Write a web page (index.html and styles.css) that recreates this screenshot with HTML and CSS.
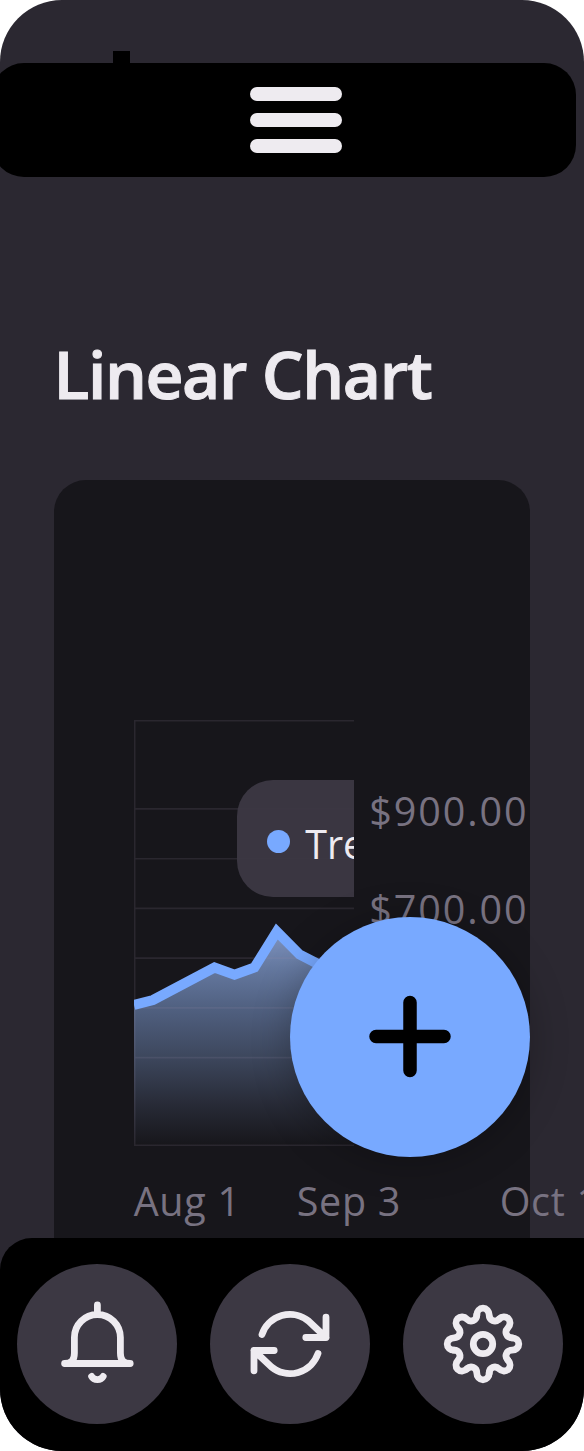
FILE: index.html
```
<!DOCTYPE html>
<html lang="en">
<head>
<meta charset="utf-8">
<title>Linear Chart</title>
<link rel="stylesheet" href="styles.css">
</head>
<body>
<div class="device">
  <header class="topbar">
    <span class="notch"></span>
    <button class="menu" aria-label="Menu"><i></i><i></i><i></i></button>
  </header>
  <main class="content">
    <h1 class="title">Linear Chart</h1>
    <section class="card">
      <div class="chart">
        <div class="plot">
          <svg class="graph" width="221" height="426" viewBox="0 0 221 426">
            <defs>
              <linearGradient id="area" gradientUnits="userSpaceOnUse" x1="0" y1="205" x2="0" y2="425">
                <stop offset="0" stop-color="#8498c4"/>
                <stop offset=".2" stop-color="#64789f"/>
                <stop offset=".38" stop-color="#506080"/>
                <stop offset=".6" stop-color="#3d475d"/>
                <stop offset=".82" stop-color="#272a36"/>
                <stop offset="1" stop-color="#17161b"/>
              </linearGradient>
            </defs>
            <path d="M0 285 19 280 80.5 247.5 100.5 254.8 120.5 247.5 142.8 211.5 165.5 234.5 187 245.5 221 262V425H0Z" fill="url(#area)"/>
            <path class="grid" d="M0 .7H221M0 88.9H221M0 138.7H221M0 188.4H221M0 238.1H221M0 287.9H221M0 337.6H221M0 425.3H221M.7 0V426"/>
            <path class="trend" d="M0 285 19 280 80.5 247.5 100.5 254.8 120.5 247.5 142.8 211.5 165.5 234.5 187 245.5 221 262"/>
          </svg>
          <div class="tooltip"><span class="dot"></span><span>Trend</span></div>
        </div>
        <div class="prices"><span>$900.00</span><span>$700.00</span></div>
      </div>
      <div class="dates"><span class="aug">Aug 1</span><span class="sep">Sep 3</span><span>Oct 1</span></div>
    </section>
  </main>
  <button class="fab" aria-label="Add">
    <svg width="84" height="84" viewBox="0 0 84 84"><path d="M8 41.5H76M42 7.5V75.5"/></svg>
  </button>
  <nav class="tabs">
    <button class="tab" aria-label="Notifications">
      <svg class="icon" viewBox="-40 -44 80 88">
        <path d="M.4-39V-30M-32.4 19.5H33.2C25.9 19.5 23.4 15.5 23.4 9V-6.5A23 23 0 0 0-22.6-6.5V9C-22.6 15.5-25.1 19.5-32.4 19.5M-5.4 32.4C-3.1 36.7 3.9 36.7 6.2 32.4"/>
      </svg>
    </button>
    <button class="tab" aria-label="Refresh">
      <svg class="icon" viewBox="-40 -44 80 88">
        <g id="turn"><path d="M-28-9.5A29.5 29.5 0 0 1 18.5-23L36-6.5M36-26.8V-6.5H15.8"/></g>
        <use href="#turn" transform="rotate(180)"/>
      </svg>
    </button>
    <button class="tab" aria-label="Settings">
      <svg class="icon" viewBox="-40 -44 80 88">
        <circle r="9.7"/>
        <g id="tooth"><path d="M-6.2-29A6.2 6.8 0 0 1 6.2-29C6.2-23.5 12.2-21 16.1-24.9"/></g>
        <use href="#tooth" transform="rotate(45)"/>
        <use href="#tooth" transform="rotate(90)"/>
        <use href="#tooth" transform="rotate(135)"/>
        <use href="#tooth" transform="rotate(180)"/>
        <use href="#tooth" transform="rotate(225)"/>
        <use href="#tooth" transform="rotate(270)"/>
        <use href="#tooth" transform="rotate(315)"/>
      </svg>
    </button>
  </nav>
</div>
</body>
</html>
```
FILE: styles.css
```
* { box-sizing: border-box; }
body { margin: 0; background: #fff; overflow: hidden; font-family: "Open Sans", "Noto Sans", sans-serif; }
button { border: 0; padding: 0; margin: 0; }
.device { position: relative; width: 583.5px; height: 1450.5px; border-radius: 62px; overflow: hidden; background: #2b2831; }
.topbar { position: absolute; top: 63px; left: -8px; width: 584px; height: 114px; border-radius: 32px; background: #000; display: flex; justify-content: center; align-items: center; }
.notch { position: absolute; left: 121px; top: -12px; width: 17px; height: 14px; background: #000; }
.menu { display: flex; flex-direction: column; gap: 12.6px; width: 92px; margin-left: 23px; background: none; }
.menu i { height: 13.4px; border-radius: 7px; background: #eeebf0; }
.content { padding: 327px 53.5px 0; }
.title { margin: 0; height: 93px; line-height: 92px; font-size: 66px; font-weight: 600; -webkit-text-stroke: 1px #eeebf0; color: #eeebf0; white-space: nowrap; letter-spacing: -1.4px; }
.card { margin-top: 60px; height: 980px; border-radius: 32px; background: #17161b; padding: 240px 0 0 80.2px; }
.chart { display: flex; }
.plot { position: relative; width: 220.5px; height: 426px; overflow: hidden; flex: none; }
.graph { display: block; }
.grid { fill: none; stroke: #9b8fab; stroke-opacity: .15; stroke-width: 1.6; }
.trend { fill: none; stroke: #78a9ff; stroke-width: 10; stroke-linejoin: miter; }
.tooltip { position: absolute; left: 103px; top: 60px; width: 220px; height: 117px; padding: 11px 0 0 30px; display: flex; align-items: center; gap: 15px; border-radius: 36px; background: rgba(60,56,67,.95); color: #eeebf0; font-size: 39.5px; font-weight: 400; }
.tooltip .dot { width: 23.5px; height: 23.5px; margin-top: -5px; border-radius: 50%; background: #78a9ff; }
.prices { display: flex; flex-direction: column; gap: 43px; padding: 63.5px 0 0 15px; color: #787281; font-size: 39.5px; line-height: 55px; letter-spacing: 1.9px; }
.dates { display: flex; margin-top: 28px; color: #787281; font-size: 39.5px; line-height: 55px; white-space: nowrap; letter-spacing: .7px; }
.aug { flex: none; width: 163px; }
.sep { flex: none; width: 203px; }
.fab { position: absolute; left: 290px; top: 916.6px; width: 240px; height: 240px; border-radius: 50%; background: #78a9ff; display: grid; place-items: center; box-shadow: 0 4px 38px rgba(0,0,0,.26); }
.fab path { fill: none; stroke: #000; stroke-width: 13.5; stroke-linecap: round; }
.tabs { position: absolute; left: 0; bottom: 0; width: 100%; height: 213px; padding: 0 20.2px 0 16.5px; display: flex; justify-content: space-between; align-items: center; border-radius: 32px 0 0 0; background: #000; }
.tab { width: 160px; height: 160px; border-radius: 50%; background: #3c3843; display: grid; place-items: center; }
.icon { width: 80px; height: 88px; fill: none; stroke: #eeebf0; stroke-width: 6.8; stroke-linecap: round; stroke-linejoin: round; }
```
